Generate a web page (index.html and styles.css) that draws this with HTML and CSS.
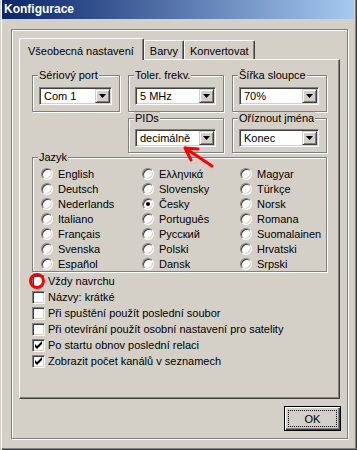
FILE: index.html
```html
<!DOCTYPE html>
<html lang="cs">

<head>
  <meta charset="UTF-8">
  <title>Konfigurace</title>
  <link rel="stylesheet" href="styles.css">
</head>

<body>
  <div class="window">
    <div class="titlebar">Konfigurace</div>

    <div class="panel">
      <div class="tabs">
        <div class="tab active">Všeobecná nastavení</div>
        <div class="tab">Barvy</div>
        <div class="tab">Konvertovat</div>
      </div>

      <div class="page">
        <div class="combos">
          <div class="group">
            <span class="legend">Sériový port</span>
            <div class="combo"><span>Com 1</span><i class="drop"></i></div>
          </div>
          <div class="group">
            <span class="legend">Toler. frekv.</span>
            <div class="combo"><span>5 MHz</span><i class="drop"></i></div>
          </div>
          <div class="group">
            <span class="legend">Šířka sloupce</span>
            <div class="combo"><span>70%</span><i class="drop"></i></div>
          </div>
          <div class="group low col2">
            <span class="legend">PIDs</span>
            <div class="combo"><span>decimálně</span><i class="drop"></i></div>
          </div>
          <div class="group low">
            <span class="legend">Oříznout jména</span>
            <div class="combo"><span>Konec</span><i class="drop"></i></div>
          </div>
        </div>

        <div class="group lang">
          <span class="legend">Jazyk</span>
          <div class="radios">
            <label class="radio"><i></i>English</label>
            <label class="radio"><i></i>Deutsch</label>
            <label class="radio"><i></i>Nederlands</label>
            <label class="radio"><i></i>Italiano</label>
            <label class="radio"><i></i>Français</label>
            <label class="radio"><i></i>Svenska</label>
            <label class="radio"><i></i>Español</label>
            <label class="radio"><i></i>Ελληνικά</label>
            <label class="radio"><i></i>Slovensky</label>
            <label class="radio"><i class="on"></i>Česky</label>
            <label class="radio"><i></i>Português</label>
            <label class="radio"><i></i>Русский</label>
            <label class="radio"><i></i>Polski</label>
            <label class="radio"><i></i>Dansk</label>
            <label class="radio"><i></i>Magyar</label>
            <label class="radio"><i></i>Türkçe</label>
            <label class="radio"><i></i>Norsk</label>
            <label class="radio"><i></i>Romana</label>
            <label class="radio"><i></i>Suomalainen</label>
            <label class="radio"><i></i>Hrvatski</label>
            <label class="radio"><i></i>Srpski</label>
          </div>
        </div>

        <div class="checks">
          <label class="check"><i></i>Vždy navrchu</label>
          <label class="check"><i></i>Názvy: krátké</label>
          <label class="check"><i></i>Při spuštění použít poslední soubor</label>
          <label class="check"><i></i>Při otevírání použít osobní nastavení pro satelity</label>
          <label class="check"><i><svg viewBox="0 0 9 9"><path d="M1 3v3l2 2 5-5v-3l-5 5z"/></svg></i>Po startu obnov poslední relaci</label>
          <label class="check"><i><svg viewBox="0 0 9 9"><path d="M1 3v3l2 2 5-5v-3l-5 5z"/></svg></i>Zobrazit počet kanálů v seznamech</label>
        </div>
      </div>

      <div class="buttons">
        <button class="btn"><span class="focus">OK</span></button>
      </div>
    </div>

    <!-- red marks drawn over the dialog -->
    <div class="mark_circle"></div>
    <svg class="mark_arrow" viewBox="0 0 357 450">
      <path d="M212 166L185 148M185 148L198 149M185 148L191 160" />
    </svg>
  </div>
</body>

</html>
```

FILE: styles.css
```css
* {
  box-sizing: border-box;
  margin: 0;
  padding: 0;
}

body {
  background-color: #d4d0c8;
  color: #000000;
  font-family: "Liberation Sans", Arial, sans-serif;
  font-size: 11px;
}

.window {
  background-color: #d4d0c8;
  box-shadow: inset 1px 0 #d4d0c8, inset 2px 0 #ffffff, inset -1px -1px #404040, inset -2px -2px #808080;
  height: 450px;
  overflow: hidden;
  position: relative;
  width: 357px;
}

.titlebar {
  background: linear-gradient(to right, #0a246a, #a6caf0);
  color: #ffffff;
  font-size: 12px;
  font-weight: bold;
  height: 19px;
  line-height: 19px;
  margin: 0 3px 0 2px;
  padding-left: 2px;
}

.panel {
  border: 1px solid #808080;
  box-shadow: 1px 1px #ffffff, inset 1px 1px #ffffff;
  height: 410px;
  margin: 10px 0 0 11px;
  padding: 8px 0 0 7px;
  width: 337px;
}

/* tabs */

.tabs {
  align-items: flex-end;
  display: flex;
  height: 21px;
}

.tab {
  border: 1px solid;
  border-bottom: none;
  border-color: #ffffff #404040 #ffffff #ffffff;
  border-radius: 2px 2px 0 0;
  box-shadow: inset -1px 0 #808080;
  height: 19px;
  line-height: 13px;
  padding: 4px 5px 0;
}

.tab.active {
  background-color: #d4d0c8;
  height: 22px;
  margin-bottom: -1px;
  padding: 6px 9px 0 8px;
  position: relative;
  z-index: 1;
}

.page {
  border: 1px solid;
  border-color: #ffffff #404040 #404040 #ffffff;
  box-shadow: inset -1px -1px #808080;
  height: 340px;
  padding: 15px 0 0 12px;
  width: 321px;
}

/* group boxes */

.group {
  border: 1px solid #808080;
  box-shadow: 1px 1px #ffffff, inset 1px 1px #ffffff;
  position: relative;
}

.legend {
  background-color: #d4d0c8;
  left: 5px;
  line-height: 13px;
  padding: 0 1px;
  position: absolute;
  top: -7px;
}

.combos {
  column-gap: 8px;
  display: grid;
  grid-template-columns: 88px 96px 95px;
  row-gap: 6px;
}

.combos .group {
  height: 37px;
  padding: 11px 7px 0 6px;
}

.combos .group.low {
  height: 35px;
  padding-top: 10px;
}

.combos .col2 {
  grid-column: 2;
}

.combo {
  align-items: center;
  background-color: #ffffff;
  border: 1px solid;
  border-color: #808080 #ffffff #ffffff #808080;
  box-shadow: inset 1px 1px #404040, inset -1px -1px #d4d0c8;
  display: flex;
  height: 18px;
  padding: 1px 1px 1px 4px;
}

.drop {
  align-items: center;
  background-color: #d4d0c8;
  border: 1px solid;
  border-color: #d4d0c8 #404040 #404040 #d4d0c8;
  box-shadow: inset 1px 1px #ffffff, inset -1px -1px #808080;
  display: flex;
  height: 14px;
  justify-content: center;
  margin-left: auto;
  width: 15px;
}

.drop::after {
  background-color: #000000;
  clip-path: polygon(0 0, 100% 0, 50% 100%);
  content: "";
  height: 4px;
  width: 7px;
}

/* languages */

.lang {
  height: 115px;
  margin-top: 4px;
  padding: 8px 0 0 8px;
  width: 295px;
}

.radios {
  display: grid;
  grid-auto-flow: column;
  grid-template-columns: 101px 98px 1fr;
  grid-template-rows: repeat(7, 15px);
}

.radio {
  align-items: center;
  display: flex;
  gap: 5px;
}

.radio i {
  align-items: center;
  background-color: #ffffff;
  border: 1px solid;
  border-color: #808080 #ffffff #ffffff #808080;
  border-radius: 50%;
  box-shadow: inset 1px 1px #404040, inset -1px -1px #d4d0c8;
  display: flex;
  height: 12px;
  justify-content: center;
  width: 12px;
}

.radio i.on::after {
  background-color: #000000;
  border-radius: 50%;
  content: "";
  height: 4px;
  width: 4px;
}

/* check boxes */

.checks {
  margin-top: 1px;
}

.check {
  align-items: center;
  display: flex;
  gap: 3px;
  height: 16px;
}

.check i {
  align-items: center;
  background-color: #ffffff;
  border: 1px solid;
  border-color: #808080 #ffffff #ffffff #808080;
  box-shadow: inset 1px 1px #404040, inset -1px -1px #d4d0c8;
  display: flex;
  height: 13px;
  justify-content: center;
  width: 13px;
}

.check svg {
  fill: #000000;
  height: 9px;
  width: 9px;
}

/* buttons */

.buttons {
  display: flex;
  justify-content: flex-end;
  margin-top: 7px;
  width: 322px;
}

.btn {
  background-color: #d4d0c8;
  border: 1px solid #000000;
  box-shadow: inset 1px 1px #ffffff, inset -1px -1px #404040, inset -2px -2px #808080;
  font: inherit;
  height: 25px;
  padding: 3px;
  width: 57px;
}

.btn .focus {
  align-items: center;
  border: 1px dotted #000000;
  display: flex;
  height: 100%;
  justify-content: center;
}

/* annotations */

.mark_circle {
  border: 3px solid #ff0000;
  border-radius: 50%;
  height: 16px;
  left: 29px;
  position: absolute;
  top: 273px;
  width: 16px;
}

.mark_arrow {
  fill: none;
  height: 450px;
  left: 0;
  pointer-events: none;
  position: absolute;
  stroke: #ff0000;
  stroke-linecap: round;
  stroke-width: 3;
  top: 0;
  width: 357px;
}
```
